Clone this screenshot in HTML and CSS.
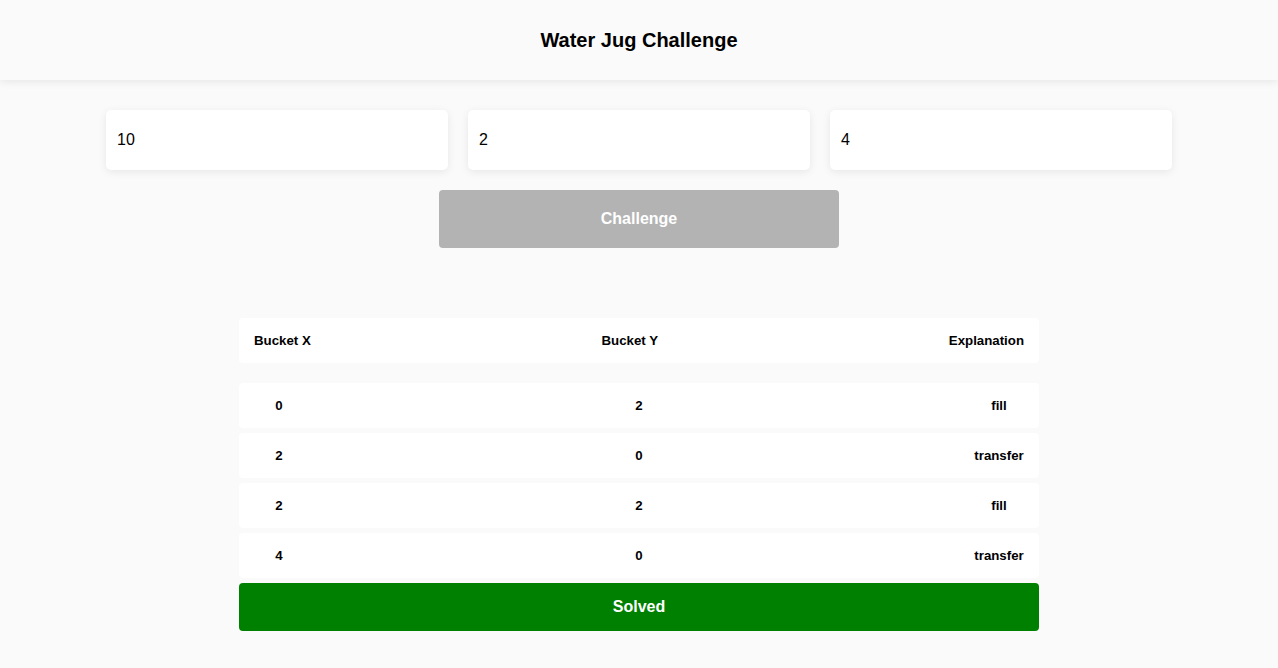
FILE: index.html
```html
<!DOCTYPE html>
<html>
<head>
<meta charset="utf-8">
<link rel="stylesheet" href="styles.css">
</head>
<body>
<header class="topbar"><h1 class="title">Water Jug Challenge</h1></header>
<main class="content">
  <div class="inputs">
    <input class="field" type="text" value="10">
    <input class="field" type="text" value="2">
    <input class="field" type="text" value="4">
  </div>
  <button class="challenge" disabled>Challenge</button>
  <section class="table">
    <div class="thead">
      <span>Bucket X</span><span>Bucket Y</span><span>Explanation</span>
    </div>
    <div class="rows">
      <div class="row"><span class="cell">0</span><span class="cell">2</span><span class="cell">fill</span></div>
      <div class="row"><span class="cell">2</span><span class="cell">0</span><span class="cell">transfer</span></div>
      <div class="row"><span class="cell">2</span><span class="cell">2</span><span class="cell">fill</span></div>
      <div class="row"><span class="cell">4</span><span class="cell">0</span><span class="cell">transfer</span></div>
      <div class="solved">Solved</div>
    </div>
  </section>
</main>
</body>
</html>
```
FILE: styles.css
```css
* { box-sizing: border-box; }
html, body { margin: 0; padding: 0; }
body {
  background: #fafafa;
  font-family: "Liberation Sans", Arial, sans-serif;
  color: #000;
  width: 1278px;
  height: 668px;
  overflow: hidden;
}
.topbar {
  height: 80px;
  background: #fafafa;
  box-shadow: 0 2px 8px rgba(0,0,0,0.08);
  display: flex;
  align-items: center;
  justify-content: center;
  position: relative;
  z-index: 1;
}
.title {
  margin: 0;
  font-size: 20px;
  font-weight: bold;
}
.content {
  display: flex;
  flex-direction: column;
  align-items: center;
  padding-top: 30px;
}
.inputs {
  display: flex;
  gap: 20px;
  width: 1066px;
}
.field {
  flex: 1;
  width: 0;
  height: 60px;
  border: none;
  outline: none;
  background: #fff;
  border-radius: 5px;
  box-shadow: 0 2px 8px rgba(0,0,0,0.08);
  padding: 0 11px;
  font-family: "Liberation Sans", Arial, sans-serif;
  font-size: 16px;
  color: #000;
}
.challenge {
  margin-top: 20px;
  width: 400px;
  height: 58px;
  border: none;
  border-radius: 4px;
  background: #b3b3b3;
  color: #fff;
  font-family: "Liberation Sans", Arial, sans-serif;
  font-size: 16px;
  font-weight: bold;
}
.table {
  margin-top: 70px;
  width: 800px;
}
.thead {
  height: 45px;
  background: #fff;
  border-radius: 4px;
  display: flex;
  align-items: center;
  justify-content: space-between;
  padding: 0 15px;
  font-size: 13.28px;
  font-weight: bold;
}
.rows {
  margin-top: 20px;
  display: flex;
  flex-direction: column;
  gap: 5px;
}
.row {
  height: 45px;
  background: #fff;
  border-radius: 4px;
  display: flex;
  align-items: center;
  justify-content: space-between;
  padding: 0 15px;
  font-size: 13.28px;
  font-weight: bold;
}
.cell {
  min-width: 50px;
  text-align: center;
}
.solved {
  height: 48px;
  background: #008000;
  color: #fff;
  border-radius: 4px;
  display: flex;
  align-items: center;
  justify-content: center;
  font-size: 16px;
  font-weight: bold;
}
```
